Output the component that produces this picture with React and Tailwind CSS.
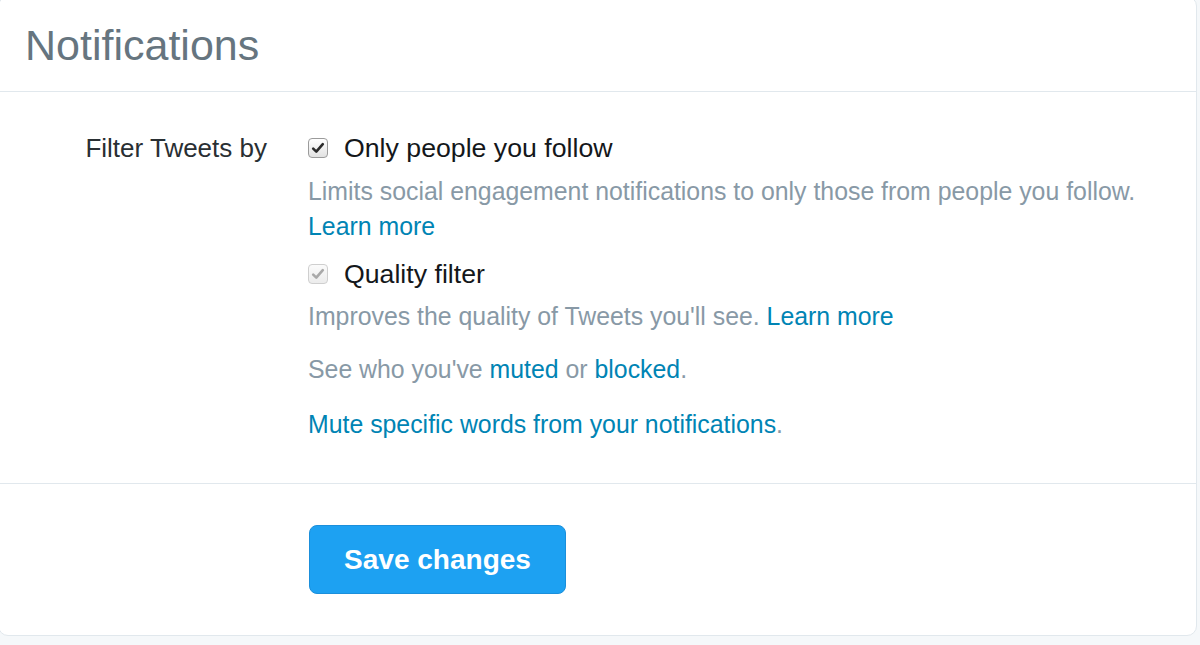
import React from "react";

function Check({ disabled }) {
  return (
    <span
      className={
        "flex h-[20px] w-[20px] shrink-0 items-center justify-center rounded-[4px] border " +
        (disabled
          ? "border-[#cfcfcf] bg-gradient-to-b from-[#fbfbfb] to-[#ececec]"
          : "border-[#9b9b9b] bg-gradient-to-b from-[#ffffff] to-[#e2e2e2]")
      }
    >
      <svg width="14" height="14" viewBox="0 0 14 14">
        <path
          d="M2.2 7.6 L5.3 10.6 L11.8 3.2"
          fill="none"
          stroke={disabled ? "#a9a9a9" : "#2b2b2b"}
          strokeWidth="2.6"
          strokeLinecap="round"
          strokeLinejoin="round"
        />
      </svg>
    </span>
  );
}

export default function App() {
  const link = "text-[#0084b4]";
  return (
    <div
      className="h-[645px] w-[1200px] overflow-hidden bg-[#f5f8fa]"
      style={{ fontFamily: '"Liberation Sans", Arial, sans-serif' }}
    >
      <div className="-ml-[2px] -mt-[4px] h-[640px] w-[1199px] rounded-[10px] border border-[#e1e8ed] bg-white">
        <div className="h-[95px] border-b border-[#e1e8ed] pl-[26px] pt-[23px]">
          <h1 className="text-[43px] font-normal leading-[1.2] text-[#66757f]">Notifications</h1>
        </div>

        <div className="flex pb-[41px] pt-[38px]">
          <div className="w-[268px] shrink-0 text-right text-[26px] leading-[36px] text-[#292f33]">
            Filter Tweets by
          </div>
          <div className="ml-[41px] flex flex-col">
            <label className="flex items-center text-[26.7px] leading-[36px] text-[#14171a]">
              <Check />
              <span className="ml-[16px]">Only people you follow</span>
            </label>
            <p className="mt-[8px] text-[24.85px] leading-[35px] text-[#8899a6]">
              Limits social engagement notifications to only those from people you follow.
              <br />
              <span className={link}>Learn more</span>
            </p>
            <label className="mt-[12px] flex items-center text-[26.7px] leading-[36px] text-[#14171a]">
              <Check disabled />
              <span className="ml-[16px]">Quality filter</span>
            </label>
            <p className="mt-[7px] text-[24.85px] leading-[35px] text-[#8899a6]">
              Improves the quality of Tweets you'll see. <span className={link}>Learn more</span>
            </p>
            <p className="mt-[18px] text-[24.85px] leading-[35px] text-[#8899a6]">
              See who you've <span className={link}>muted</span> or{" "}
              <span className={link}>blocked</span>.
            </p>
            <p className="mt-[20px] text-[24.85px] leading-[35px] text-[#8899a6]">
              <span className={link}>Mute specific words from your notifications</span>.
            </p>
          </div>
        </div>

        <div className="border-t border-[#e1e8ed] pl-[310px] pt-[41px]">
          <button className="flex h-[69px] w-[257px] items-center justify-center rounded-[8px] border border-[#1b8fdb] bg-[#1da1f2] text-[28px] font-bold text-white">
            Save changes
          </button>
        </div>
      </div>
    </div>
  );
}
